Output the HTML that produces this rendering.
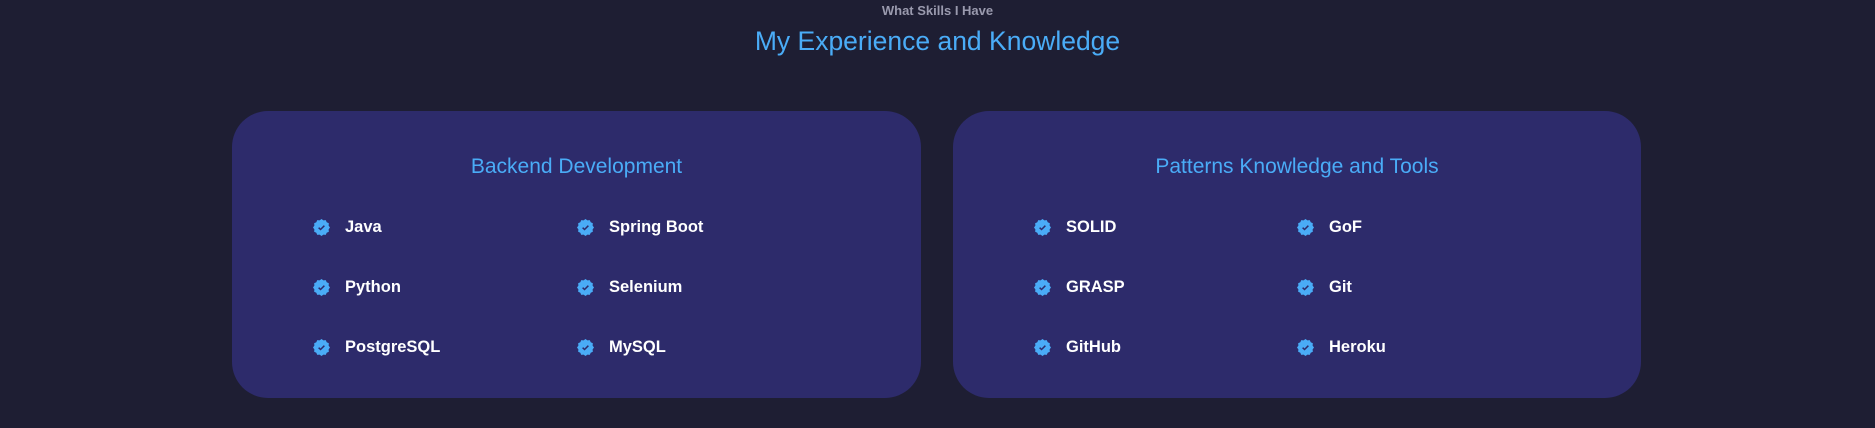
<!DOCTYPE html>
<html><head><style>
html,body{margin:0;padding:0}
body{width:1875px;height:428px;overflow:hidden;background:#1e1e33;font-family:"Liberation Sans",sans-serif;position:relative}
.sub{position:absolute;top:3px;left:0;width:1875px;text-align:center;color:#9a9aae;font-size:13px;font-weight:bold}
.h{position:absolute;top:26px;left:0;width:1875px;text-align:center;color:#4aacf7;font-size:26.5px}
.card{position:absolute;top:111px;height:287px;background:#2d2b6b;border-radius:36px}
.ct{position:absolute;width:100%;text-align:center;color:#4aacf7;font-size:21px}
.it{position:absolute;color:#fff;font-size:16.5px;font-weight:bold;height:20px;line-height:20px}
.it svg{position:absolute;left:-32px;top:2px}
</style></head><body>
<div class="sub">What Skills I Have</div>
<div class="h">My Experience and Knowledge</div>
<div class="card" style="left:232px;width:689px"><div class="ct" style="top:44px">Backend Development</div></div>
<div class="card" style="left:953px;width:688px"><div class="ct" style="top:44px">Patterns Knowledge and Tools</div></div>
<div id="items"></div>
<script>
var s='<svg width="17" height="17" viewBox="0 0 16 16"><path d="M8 0.5l1.8 1.3 2.2-.2.9 2 2 .9-.2 2.2L16 8.5l-1.3 1.8.2 2.2-2 .9-.9 2-2.2-.2L8 16.5l-1.8-1.3-2.2.2-.9-2-2-.9.2-2.2L0 8.5l1.3-1.8-.2-2.2 2-.9.9-2 2.2.2z" fill="#4aacf7" transform="translate(0,-0.5)"/><path d="M5.3 8.2l1.8 1.7 3.6-3.6" stroke="#2d2b6b" stroke-width="1.4" fill="none"/></svg>';
var d=[[345,'Java'],[609,'Spring Boot'],[1066,'SOLID'],[1329,'GoF'],[345,'Python'],[609,'Selenium'],[1066,'GRASP'],[1329,'Git'],[345,'PostgreSQL'],[609,'MySQL'],[1066,'GitHub'],[1329,'Heroku']];
var h='';d.forEach(function(x,i){var y=[217,277,337][Math.floor(i/4)];h+='<div class="it" style="left:'+x[0]+'px;top:'+y+'px">'+s+x[1]+'</div>';});
document.getElementById('items').innerHTML=h;
</script>
</body></html>
